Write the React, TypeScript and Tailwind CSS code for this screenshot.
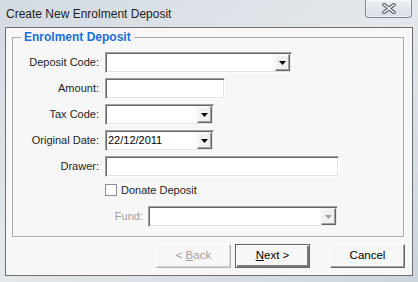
// Wizard dialog: "Create New Enrolment Deposit", classic WinForms look.

const font = "font-['Liberation_Sans',Arial,sans-serif]";

const sunken =
  'border border-t-[#a0a0a0] border-l-[#a0a0a0] border-b-white border-r-white shadow-[inset_1px_1px_0_#696969,inset_-1px_-1px_0_#e3e3e3]';

function DropArrow({ disabled = false }: { disabled?: boolean }) {
  return (
    <div className="h-full w-[16px] p-[1px] pl-0 shrink-0">
      <div className="h-full w-full flex items-center justify-center bg-[#f0f0f0] border border-t-[#f0f0f0] border-l-[#f0f0f0] border-b-[#696969] border-r-[#696969] shadow-[inset_-1px_-1px_0_#a0a0a0,inset_1px_1px_0_#ffffff]">
        <svg width="7" height="4" viewBox="0 0 7 4">
          <path d="M0 0h7L3.5 4z" fill={disabled ? '#a0a0a0' : '#000'} />
        </svg>
      </div>
    </div>
  );
}

function Combo({ width, value = '', disabled = false }: { width: string; value?: string; disabled?: boolean }) {
  return (
    <div className={`${width} h-[21px] bg-white flex items-stretch ${sunken}`}>
      <div className="flex-1 pl-[2px] flex items-center text-[11px] text-black">{value}</div>
      <DropArrow disabled={disabled} />
    </div>
  );
}

function TextBox({ width }: { width: string }) {
  return <div className={`${width} h-[21px] bg-white ${sunken}`} />;
}

function Row({ label, children, className = '' }: { label: string; children: React.ReactNode; className?: string }) {
  return (
    <div className={`flex items-center ${className}`}>
      <div className="w-[87px] text-right text-[11px] text-[#1e1e1e] pr-[1px]">{label}</div>
      <div className="ml-[5px]">{children}</div>
    </div>
  );
}

function WinButton({ children, variant = 'normal' }: { children: React.ReactNode; variant?: 'normal' | 'default' | 'disabled' }) {
  const styles = {
    normal:
      'border border-t-white border-l-white border-b-[#696969] border-r-[#696969] shadow-[inset_-1px_-1px_0_#a0a0a0] text-black',
    default:
      'border border-[#646464] shadow-[inset_1px_1px_0_#ffffff,inset_-2px_-2px_0_#7a7a7a] text-black',
    disabled:
      'border border-t-white border-l-white border-b-[#b4b4b4] border-r-[#b4b4b4] shadow-[inset_-1px_-1px_0_#d4d4d4] text-[#a0a0a0]',
  };
  return (
    <div className={`w-[75px] h-[24px] flex items-center justify-center bg-[#f7f7f7] text-[11.5px] ${styles[variant]}`}>
      {children}
    </div>
  );
}

export default function App() {
  return (
    <div
      className={`w-[418px] h-[282px] flex flex-col overflow-hidden bg-gradient-to-br from-[#d3dae2] via-[#e4e8ec] to-[#cdd4dc] ${font}`}
    >
      {/* Title bar */}
      <div className="h-[27px] flex items-start shrink-0">
        <span className="pl-[6px] pt-[8px] text-[12px] text-[#1e1e1e] leading-none">Create New Enrolment Deposit</span>
        <div className="ml-auto mr-[6px] w-[47px] h-[18px] rounded-b-[4px] border border-t-0 border-[#7e8794] bg-gradient-to-b from-[#eef1f4] to-[#d7dde4] shadow-[inset_0_0_0_1px_rgba(255,255,255,0.6)] flex items-center justify-center">
          <svg width="14" height="11" viewBox="0 0 14 11">
            <path d="M2 1.5L12 9.5M12 1.5L2 9.5" stroke="#5a5f66" strokeWidth="3.6" strokeLinecap="round" />
            <path d="M2 1.5L12 9.5M12 1.5L2 9.5" stroke="#f4f5f7" strokeWidth="1.6" strokeLinecap="round" />
          </svg>
        </div>
      </div>

      {/* Client area */}
      <div className="mx-[5px] h-[249px] border border-[#6f6f6f] bg-[#f7f7f7] flex flex-col shrink-0">
        {/* Group box */}
        <div className="relative ml-[6px] mr-[8px] mt-[9px] h-[200px] border border-[#a8a8a8] shadow-[1px_1px_0_#ffffff]">
          <span className="absolute -top-[8px] left-[8px] px-[3px] bg-[#f7f7f7] text-[12px] font-bold text-[#1a6fd8] leading-[14px]">
            Enrolment Deposit
          </span>

          <div className="pt-[14px] flex flex-col">
            <Row label="Deposit Code:">
              <Combo width="w-[187px]" />
            </Row>
            <Row label="Amount:" className="mt-[5px]">
              <TextBox width="w-[120px]" />
            </Row>
            <Row label="Tax Code:" className="mt-[5px]">
              <Combo width="w-[109px]" />
            </Row>
            <Row label="Original Date:" className="mt-[5px]">
              <Combo width="w-[109px]" value="22/12/2011" />
            </Row>
            <Row label="Drawer:" className="mt-[5px]">
              <TextBox width="w-[234px]" />
            </Row>

            <div className="flex items-center mt-[7px] ml-[92px]">
              <div className="w-[12px] h-[12px] border border-[#8e8f8f] bg-white" />
              <span className="ml-[4px] text-[11px] text-[#1e1e1e] leading-none">Donate Deposit</span>
            </div>

            <div className="flex items-center mt-[10px] ml-[92px]">
              <div className="w-[38px] text-right text-[11px] text-[#a0a0a0]">Fund:</div>
              <div className="ml-[5px]">
                <Combo width="w-[190px]" disabled />
              </div>
            </div>
          </div>
        </div>

        {/* Wizard buttons */}
        <div className="flex items-center mt-[7px] pl-[150px]">
          <WinButton variant="disabled">
            &lt; <span className="underline ml-[3px]">B</span>ack
          </WinButton>
          <div className="ml-[4px]">
            <WinButton variant="default">
              <span className="underline">N</span>ext &gt;
            </WinButton>
          </div>
          <div className="ml-[20px]">
            <WinButton>Cancel</WinButton>
          </div>
        </div>
      </div>
    </div>
  );
}
